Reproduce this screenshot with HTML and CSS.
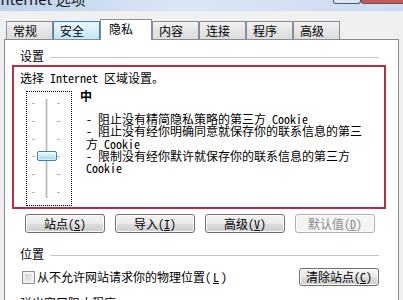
FILE: index.html
```html
<!DOCTYPE html>
<html lang="zh-CN">
<head>
    <meta charset="UTF-8">
    <title>Internet 选项</title>
    <link rel="stylesheet" href="styles.css">
</head>
<body>
    <div class="titlebar">
        <span class="title">Internet 选项</span>
        <span class="caption help"></span>
        <span class="caption close"></span>
    </div>

    <div class="tabs">
        <div class="tab">常规</div>
        <div class="tab hover">安全</div>
        <div class="tab active">隐私</div>
        <div class="tab">内容</div>
        <div class="tab">连接</div>
        <div class="tab">程序</div>
        <div class="tab">高级</div>
    </div>

    <div class="panel">
        <div class="group-title"><span>设置</span></div>

        <div class="zone">
            <div class="zone-label">选择 Internet 区域设置。</div>
            <div class="zone-body">
                <div class="slider">
                    <div class="ticks">
                        <span></span><span></span><span></span><span></span><span></span><span></span>
                    </div>
                    <div class="track">
                        <div class="thumb"></div>
                    </div>
                    <div class="ticks right">
                        <span></span><span></span><span></span><span></span><span></span><span></span>
                    </div>
                </div>
                <div class="level">
                    <div class="level-name">中</div>
                    <ul class="level-rules">
                        <li>- 阻止没有精简隐私策略的第三方 Cookie</li>
                        <li>- 阻止没有经你明确同意就保存你的联系信息的第三方 Cookie</li>
                        <li>- 限制没有经你默许就保存你的联系信息的第三方 Cookie</li>
                    </ul>
                </div>
            </div>
        </div>

        <div class="btn-row">
            <button class="btn">站点(<u>S</u>)</button>
            <button class="btn">导入(<u>I</u>)</button>
            <button class="btn">高级(<u>V</u>)</button>
            <button class="btn" disabled>默认值(<u>D</u>)</button>
        </div>

        <div class="group-title location"><span>位置</span></div>

        <div class="check-row">
            <label class="check"><span class="box"></span>从不允许网站请求你的物理位置(<u>L</u>)</label>
            <button class="btn clear">清除站点(<u>C</u>)</button>
        </div>

        <div class="group-title popup"><span>弹出窗口阻止程序</span></div>
    </div>
</body>
</html>
```

FILE: styles.css
```css
body {
    margin: 0;
    width: 403px;
    height: 300px;
    overflow: hidden;
    background-color: #f0f0f0;
    font-family: "Noto Sans Mono CJK SC", "Noto Sans CJK SC", monospace;
    font-size: 12px;
    color: #000;
}
.titlebar {
    display: flex;
    align-items: flex-start;
    height: 11px;
    overflow: hidden;
    background: linear-gradient(to right, #bfd3ec, #d9e6f5 45%, #cbdcf0);
    border-bottom: 1px solid #e6edf6;
}
.title {
    font-family: "Noto Sans CJK SC", sans-serif;
    font-size: 15px;
    line-height: 18px;
    margin-top: -10px;
    margin-left: -4px;
    color: #1a1a1a;
}
.caption {
    height: 3px;
    border: 1px solid #4f5b6b;
    border-top: none;
    border-radius: 0 0 3px 3px;
}
.help {
    margin-left: auto;
    width: 26px;
    background-color: #dbe6f3;
}
.close {
    width: 44px;
    margin-right: -4px;
    background-color: #c9574f;
}
.tabs {
    display: flex;
    align-items: flex-end;
    height: 20px;
    margin-top: 7px;
    padding-left: 6px;
}
.tab {
    box-sizing: border-box;
    width: 47px;
    height: 18px;
    padding: 2px 0 0 6px;
    line-height: 14px;
    border: 1px solid #898c95;
    border-bottom: none;
    background: linear-gradient(#f3f3f3, #e5e5e5 50%, #dcdcdc);
}
.tab.hover {
    background: linear-gradient(#eaf6fd, #d9f0fc 50%, #bee6fd);
    border-color: #3c7fb1;
}
.tab.active {
    position: relative;
    z-index: 1;
    width: 52px;
    height: 21px;
    margin-bottom: -1px;
    padding: 2px 0 0 8px;
    background: #fff;
    border-color: #898c95;
}
.panel {
    box-sizing: border-box;
    width: 395px;
    height: 270px;
    margin-left: 4px;
    padding: 9px 12px 0 7px;
    background-color: #fff;
    border: 1px solid #898c95;
}
.group-title {
    display: flex;
    align-items: center;
    gap: 6px;
    height: 14px;
    margin: 0 7px 2px 8px;
    line-height: 14px;
}
.group-title::after {
    content: "";
    flex: 1;
    height: 0;
    margin-top: 2px;
    border-top: 1px solid #c4c4c4;
}
.zone {
    border: 2px solid #b6313b;
    padding: 4px 13px 1px 6px;
}
.zone-label {
    line-height: 14px;
}
.zone-body {
    display: flex;
    gap: 8px;
    margin-top: 5px;
}
.slider {
    box-sizing: border-box;
    display: flex;
    width: 46px;
    height: 115px;
    margin: 1px 0 0 6px;
    padding: 7px 0 7px 5px;
    border: 1px dotted #000;
}
.ticks {
    display: flex;
    flex-direction: column;
    justify-content: space-between;
    padding: 4px 0 5px;
}
.ticks span {
    display: block;
    width: 3px;
    height: 1px;
    background-color: #b4b4b4;
}
.ticks.right {
    margin-left: 9px;
}
.track {
    position: relative;
    width: 1px;
    margin-left: 10px;
    background-color: #b9b9b9;
    border-left: 1px solid #e4e4e4;
    border-right: 1px solid #e4e4e4;
}
.thumb {
    position: absolute;
    top: 52px;
    left: 50%;
    transform: translateX(-50%);
    box-sizing: border-box;
    width: 20px;
    height: 10px;
    border: 1px solid #3c7fb1;
    border-radius: 2px;
    background: linear-gradient(#f0faff, #c4eafc 50%, #9fd6f3);
    box-shadow: inset 0 0 0 1px rgba(255,255,255,0.6);
}
.level {
    width: 290px;
}
.level-name {
    font-weight: bold;
    line-height: 12px;
}
.level-rules {
    list-style: none;
    margin: 11px 0 0;
    padding-left: 6px;
    line-height: 12.25px;
}
.btn-row {
    display: flex;
    gap: 10px;
    margin: 5px 0 0 13px;
}
.btn {
    box-sizing: border-box;
    width: 80px;
    height: 19px;
    padding: 0;
    font-family: inherit;
    font-size: 12px;
    line-height: 14px;
    color: #000;
    border: 1px solid #707070;
    border-radius: 3px;
    background: linear-gradient(#f2f2f2, #ebebeb 50%, #dddddd 51%, #cfcfcf);
    box-shadow: inset 0 0 0 1px #fcfcfc;
}
.btn:disabled {
    color: #8a8a8a;
    border-color: #adb2b5;
    background: #f4f4f4;
}
.group-title.location {
    margin-top: 14px;
}
.check-row {
    display: flex;
    align-items: center;
    justify-content: space-between;
    margin: 7px 7px 0 10px;
}
.check {
    display: flex;
    align-items: center;
    gap: 2px;
    line-height: 14px;
}
.box {
    box-sizing: border-box;
    width: 13px;
    height: 13px;
    border: 1px solid #8e8f8f;
    background: linear-gradient(135deg, #c9ccd1, #f4f4f4);
    box-shadow: inset 0 0 0 2px #f2f2f2;
}
.btn.clear {
    height: 18px;
}
.group-title.popup {
    margin-top: 10px;
}
```
